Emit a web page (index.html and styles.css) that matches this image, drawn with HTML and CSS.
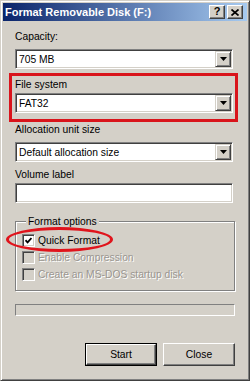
FILE: index.html
```html
<!DOCTYPE html>
<html>
<head>
<meta charset="utf-8">
<title>Format Removable Disk (F:)</title>
<link rel="stylesheet" href="styles.css">
</head>
<body>
<div class="window">
  <div class="titlebar">
    <span class="title">Format Removable Disk (F:)</span>
    <div class="caption-buttons">
      <span class="cbtn help">?</span>
      <span class="cbtn close">
        <svg width="8" height="7" viewBox="0 0 8 7"><path d="M0.5 0.5 L7.5 6.5 M7.5 0.5 L0.5 6.5" stroke="#000" stroke-width="1.7" fill="none"/></svg>
      </span>
    </div>
  </div>
  <div class="content">
    <div class="label first">Capacity:</div>
    <div class="combo">
      <span class="value">705 MB</span>
      <span class="drop"><svg width="7" height="4" viewBox="0 0 7 4"><polygon points="0,0 7,0 3.5,4" fill="#000"/></svg></span>
    </div>

    <div class="highlight">
      <div class="label">File system</div>
      <div class="combo tight">
        <span class="value">FAT32</span>
        <span class="drop"><svg width="7" height="4" viewBox="0 0 7 4"><polygon points="0,0 7,0 3.5,4" fill="#000"/></svg></span>
      </div>
    </div>

    <div class="label after-box">Allocation unit size</div>
    <div class="combo">
      <span class="value">Default allocation size</span>
      <span class="drop"><svg width="7" height="4" viewBox="0 0 7 4"><polygon points="0,0 7,0 3.5,4" fill="#000"/></svg></span>
    </div>

    <div class="label spaced">Volume label</div>
    <div class="textbox"></div>

    <fieldset class="group">
      <legend>Format options</legend>
      <div class="check-row">
        <span class="checkbox">
          <svg width="7" height="7" viewBox="0 0 7 7"><path d="M0.5 3.2 L2.6 5.4 L6.5 1" stroke="#000" stroke-width="1.8" fill="none"/></svg>
        </span>
        <span class="check-label">Quick Format</span>
      </div>
      <div class="check-row disabled">
        <span class="checkbox"></span>
        <span class="check-label">Enable Compression</span>
      </div>
      <div class="check-row disabled">
        <span class="checkbox"></span>
        <span class="check-label">Create an MS-DOS startup disk</span>
      </div>
    </fieldset>

    <div class="progress"></div>

    <div class="buttons">
      <span class="button default"><span class="button-face">Start</span></span>
      <span class="button"><span class="button-face">Close</span></span>
    </div>
  </div>
  <div class="annotation-ellipse"></div>
</div>
</body>
</html>
```

FILE: styles.css
```css
html, body {
  margin: 0;
  padding: 0;
  background: #d4d0c8;
}

body {
  font-family: "Liberation Sans", Arial, sans-serif;
  font-size: 10.3px;
  color: #000;
}

.window {
  position: relative;
  width: 250px;
  height: 381px;
  box-sizing: border-box;
  background: #d4d0c8;
  border: 1px solid;
  border-color: #d4d0c8 #404040 #404040 #d4d0c8;
  box-shadow: inset 1px 1px #ffffff, inset -1px -1px #808080;
  padding: 2px;
  display: flex;
  flex-direction: column;
}

.titlebar {
  height: 18px;
  background: linear-gradient(to right, #0a246a, #a6caf0);
  display: flex;
  align-items: center;
  justify-content: space-between;
  padding: 0 4px 0 2px;
}

.title {
  color: #fff;
  font-weight: bold;
  font-size: 11px;
  line-height: 13px;
  white-space: nowrap;
}

.caption-buttons {
  display: flex;
  gap: 2px;
}

.cbtn {
  width: 16px;
  height: 14px;
  box-sizing: border-box;
  background: #d4d0c8;
  border: 1px solid;
  border-color: #ffffff #404040 #404040 #ffffff;
  box-shadow: inset -1px -1px #808080;
  display: flex;
  align-items: center;
  justify-content: center;
}

.cbtn.help {
  font-weight: bold;
  font-size: 11px;
  line-height: 11px;
  padding-bottom: 1px;
}

.content {
  flex: 1;
  display: flex;
  flex-direction: column;
  padding: 0 12px 0 12px;
}

.label {
  line-height: 13px;
  height: 13px;
  white-space: nowrap;
}

.label.first {
  margin-top: 9px;
}

.combo, .textbox {
  height: 20px;
  box-sizing: border-box;
  margin-right: 2px;
  background: #fff;
  border: 1px solid;
  border-color: #808080 #ffffff #ffffff #808080;
  box-shadow: inset 1px 1px #404040, inset -1px -1px #d4d0c8;
  padding: 1px 2px 1px 2px;
  display: flex;
  align-items: center;
}

.combo {
  margin-top: 6px;
}

.combo.tight {
  margin-top: 2px;
}

.value {
  flex: 1;
  padding-left: 1px;
  line-height: 13px;
  white-space: nowrap;
}

.drop {
  width: 16px;
  height: 16px;
  box-sizing: border-box;
  background: #d4d0c8;
  border: 1px solid;
  border-color: #d4d0c8 #404040 #404040 #d4d0c8;
  box-shadow: inset 1px 1px #ffffff, inset -1px -1px #808080;
  display: flex;
  align-items: center;
  justify-content: center;
  margin-right: -1px;
}

.highlight {
  margin: 4px -3px 0 -6px;
  border: 3px solid #d9141b;
  padding: 2px 0 6px 3px;
  display: flex;
  flex-direction: column;
}

.label.after-box {
  margin-top: 1px;
}

.label.spaced {
  margin-top: 6px;
}

.textbox {
  margin-top: 2px;
}

.group {
  margin: 12px 0 0 0;
  padding: 4px 0 7px 6px;
  border: 1px solid #808080;
  box-shadow: inset 1px 1px #ffffff, 1px 1px #ffffff;
  min-width: 0;
}

.group legend {
  margin-left: 4px;
  padding: 0 2px;
  line-height: 13px;
  background: #d4d0c8;
}

.check-row {
  height: 17px;
  display: flex;
  align-items: center;
  gap: 3px;
}

.checkbox {
  width: 13px;
  height: 13px;
  box-sizing: border-box;
  background: #fff;
  border: 1px solid;
  border-color: #808080 #ffffff #ffffff #808080;
  box-shadow: inset 1px 1px #404040, inset -1px -1px #d4d0c8;
  display: flex;
  align-items: center;
  justify-content: center;
}

.check-row.disabled .checkbox {
  background: #d4d0c8;
}

.check-label {
  line-height: 13px;
  white-space: nowrap;
}

.check-row.disabled .check-label {
  color: #9a9690;
  text-shadow: 1px 1px #ffffff;
}

.progress {
  margin-top: 13px;
  height: 12px;
  box-sizing: border-box;
  border: 1px solid;
  border-color: #808080 #ffffff #ffffff #808080;
}

.buttons {
  margin-top: 27px;
  display: flex;
  justify-content: flex-end;
  gap: 6px;
}

.button {
  width: 72px;
  height: 23px;
  box-sizing: border-box;
  display: flex;
}

.button-face {
  flex: 1;
  display: flex;
  align-items: center;
  justify-content: center;
  background: #d4d0c8;
  border: 1px solid;
  border-color: #ffffff #404040 #404040 #ffffff;
  box-shadow: inset -1px -1px #808080;
}

.button.default {
  border: 1px solid #000;
}

.annotation-ellipse {
  position: absolute;
  left: 5px;
  top: 226px;
  width: 107px;
  height: 25px;
  box-sizing: border-box;
  border: 3px solid #e0141c;
  border-radius: 50%;
}
```
